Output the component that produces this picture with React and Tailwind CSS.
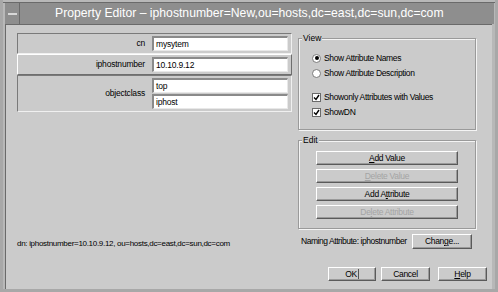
const font = { fontFamily: '"Liberation Sans", Arial, sans-serif' };

// ─── SMALL PIECES ───────────────────────────────────────
const Field = ({ value }) => (
  <div className="h-[15px] bg-white border-t-2 border-l-2 border-[#8a8a8a] border-b border-r border-b-[#e8e8e8] border-r-[#e8e8e8] flex items-center pl-[2px] text-[8.5px] tracking-[-0.2px] text-black leading-none">
    {value}
  </div>
);

const Row = ({ label, values, active }) => (
  <div
    className={`flex border ${
      active
        ? "border-t-white border-l-white border-b-[#6e6e6e] border-r-[#6e6e6e]"
        : "border-t-[#7a7a7a] border-l-[#7a7a7a] border-b-[#f0f0f0] border-r-[#f0f0f0]"
    }`}
  >
    <div className="w-[134px] flex items-center justify-end pr-[7px] text-[8.5px] tracking-[-0.2px] text-black">
      {label}
    </div>
    <div className="flex-1 flex flex-col gap-[1px] py-[2px] pr-[3px]">
      {values.map((v) => (
        <Field key={v} value={v} />
      ))}
    </div>
  </div>
);

const GroupBox = ({ title, className, children }) => (
  <div
    className={`relative border border-[#9a9a9a] shadow-[inset_1px_1px_0_#f4f4f4,1px_1px_0_#f4f4f4] ${className}`}
  >
    <span className="absolute -top-[6px] left-[3px] bg-[#cbcbcb] px-[1px] text-[8.5px] leading-[11px] text-black">
      {title}
    </span>
    {children}
  </div>
);

const Radio = ({ on, label }) => (
  <div className="flex items-center h-[12px]">
    <span className="w-[9px] h-[9px] rounded-full bg-white border border-[#7a7a7a] flex items-center justify-center">
      {on && <span className="w-[4px] h-[4px] rounded-full bg-black" />}
    </span>
    <span className="ml-[3px] text-[8.5px] text-black tracking-[-0.35px] whitespace-nowrap">{label}</span>
  </div>
);

const Check = ({ label }) => (
  <div className="flex items-center h-[12px]">
    <span className="w-[9px] h-[9px] bg-white border border-[#6a6a6a] flex items-center justify-center">
      <svg width="7" height="7" viewBox="0 0 7 7">
        <path d="M1 3.5 L3 5.5 L6 1" fill="none" stroke="#000" strokeWidth="1.4" />
      </svg>
    </span>
    <span className="ml-[3px] text-[8.5px] text-black tracking-[-0.35px] whitespace-nowrap">{label}</span>
  </div>
);

const Btn = ({ children, disabled, className = "" }) => (
  <div
    className={`h-[14px] flex items-center justify-center border border-t-white border-l-white border-b-[#5a5a5a] border-r-[#5a5a5a] shadow-[inset_-1px_-1px_0_#9a9a9a] bg-[#cbcbcb] text-[8.5px] tracking-[-0.3px] leading-none whitespace-nowrap ${
      disabled ? "text-[#a4a4a4]" : "text-black"
    } ${className}`}
  >
    {children}
  </div>
);

const U = ({ children }) => <span className="underline underline-offset-1">{children}</span>;

// ─── APP ────────────────────────────────────────────────
export default function App() {
  return (
    <div
      style={font}
      className="w-[498px] h-[292px] bg-[#b8b8b8] flex flex-col border-l-[3px] border-r-[3px] border-b-[3px] border-[#a8a8a8]"
    >
      {/* Title bar */}
      <div className="h-[22px] mt-[2px] flex border-t border-[#6a6a6a]">
        <div className="w-[15px] ml-[2px] bg-[#8e8e8e] border-r border-[#6a6a6a] flex items-center justify-center">
          <span className="w-[9px] h-[2px] bg-[#d8d8d8]" />
        </div>
        <div className="flex-1 bg-[#8e8e8e] flex items-center pl-[35px] text-[12.2px] text-white mr-[1px] whitespace-nowrap">
          Property Editor – iphostnumber=New,ou=hosts,dc=east,dc=sun,dc=com
        </div>
      </div>

      {/* Content */}
      <div className="flex-1 ml-[2px] mr-[3px] bg-[#cbcbcb] border-l border-t border-[#6a6a6a] flex flex-col pl-[11px] pt-[8px]">
        <div className="flex gap-[6px] h-[217px]">
          {/* Left */}
          <div className="w-[275px] flex flex-col">
            <div className="flex flex-col">
              <Row label="cn" values={["mysytem"]} />
              <Row label="iphostnumber" values={["10.10.9.12"]} active />
              <Row label="objectclass" values={["top", "iphost"]} />
            </div>
            <div className="flex-1" />
            <div className="text-[8px] text-black tracking-[-0.3px] whitespace-nowrap">
              dn: iphostnumber=10.10.9.12, ou=hosts,dc=east,dc=sun,dc=com
            </div>
          </div>

          {/* Right */}
          <div className="w-[178px] flex flex-col pt-[5px]">
            <GroupBox title="View" className="h-[92px] pl-[13px] pt-[13px]">
              <div className="flex flex-col gap-[3px]">
                <Radio on label="Show Attribute Names" />
                <Radio label="Show Attribute Description" />
                <div className="h-[6px]" />
                <Check label="Showonly Attributes with Values" />
                <Check label="ShowDN" />
              </div>
            </GroupBox>

            <GroupBox title="Edit" className="h-[89px] mt-[10px] px-[17px] pt-[10px]">
              <div className="flex flex-col gap-[4px]">
                <Btn>
                  <U>A</U>dd Value
                </Btn>
                <Btn disabled>
                  <U>D</U>elete Value
                </Btn>
                <Btn>
                  Add A<U>t</U>tribute
                </Btn>
                <Btn disabled>
                  De<U>l</U>ete Attribute
                </Btn>
              </div>
            </GroupBox>

            <div className="flex items-center mt-[5px] pl-[3px]">
              <span className="text-[8.5px] text-black tracking-[-0.45px] whitespace-nowrap">
                Naming Attribute: iphostnumber
              </span>
              <Btn className="ml-auto mr-[4px] w-[60px] h-[15px]">
                Chan<U>g</U>e...
              </Btn>
            </div>
          </div>
        </div>

        {/* Buttons */}
        <div className="flex justify-end gap-[5px] mt-[17px] pr-[5px]">
          <Btn className="w-[48px]">
            OK<span className="ml-[1px] w-px h-[10px] bg-[#555]" />
          </Btn>
          <Btn className="w-[49px]">Cancel</Btn>
          <Btn className="w-[49px] ml-[3px]">
            <U>H</U>elp
          </Btn>
        </div>
      </div>
    </div>
  );
}
